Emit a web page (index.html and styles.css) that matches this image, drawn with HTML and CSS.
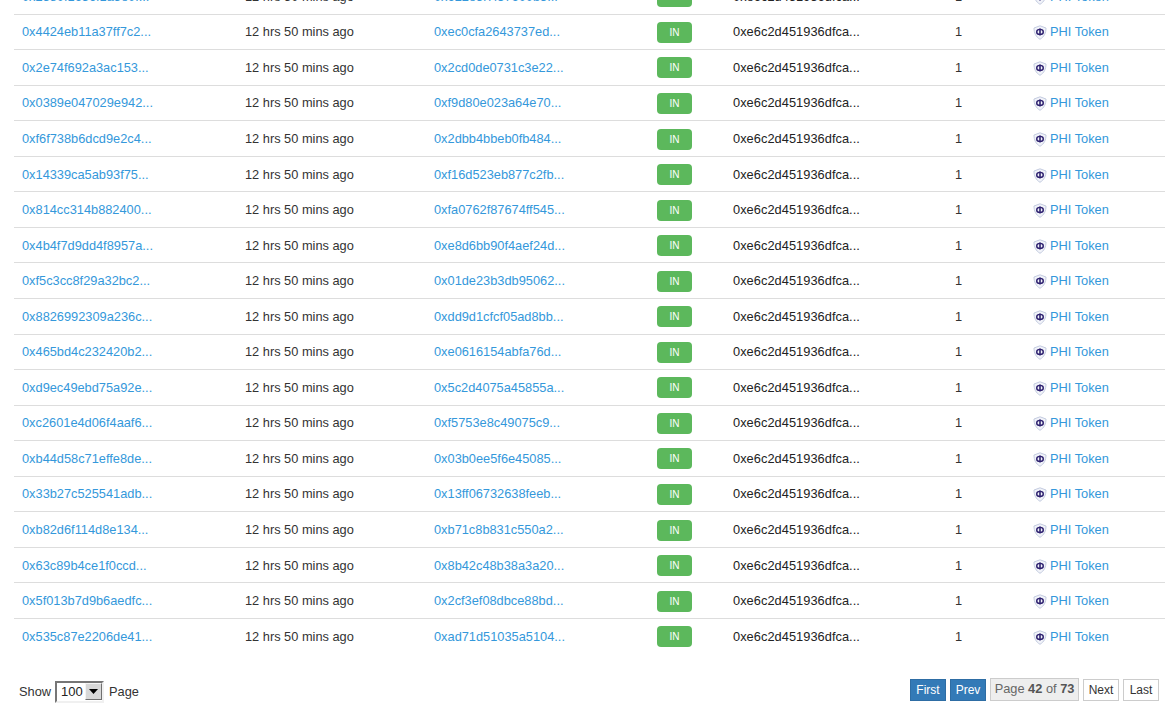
FILE: index.html
```html
<!DOCTYPE html>
<html lang="en">
<head>
<meta charset="utf-8">
<title>PHI Token transfers</title>
<link rel="stylesheet" href="styles.css">
</head>
<body>
<svg class="defs" width="0" height="0"><symbol id="phi" viewBox="0 0 14 15"><path d="M7 .8 13 3C13 8 11.2 11.8 7 14.3 2.8 11.8 1 8 1 3z" fill="#f1f3f9" stroke="#c3cbdf"/><path d="M3.7 6.9c0-1.6 1.4-2.5 3.3-2.5s3.3.9 3.3 2.5-1.4 2.5-3.3 2.5-3.3-.9-3.3-2.5z" fill="none" stroke="#2f2270" stroke-width="1.4"/><path d="M7 3.4v7.2" stroke="#2f2270" stroke-width="1.6"/></symbol></svg>
<main class="page">
<table class="txs">
<colgroup><col class="c1"><col class="c2"><col class="c3"><col class="c4"><col class="c5"><col class="c6"><col class="c7"></colgroup>
<tbody>
<tr><td><a>0x2380f1636f1a5e0f...</a></td><td>12 hrs 50 mins ago</td><td><a>0x622e5f7f37600b3...</a></td><td><span class="badge">IN</span></td><td><span class="hash">0xe6c2d451936dfca...</span></td><td>1</td><td><a class="token"><svg class="ico"><use href="#phi"/></svg><span>PHI Token</span></a></td></tr>
<tr><td><a>0x4424eb11a37ff7c2...</a></td><td>12 hrs 50 mins ago</td><td><a>0xec0cfa2643737ed...</a></td><td><span class="badge">IN</span></td><td><span class="hash">0xe6c2d451936dfca...</span></td><td>1</td><td><a class="token"><svg class="ico"><use href="#phi"/></svg><span>PHI Token</span></a></td></tr>
<tr><td><a>0x2e74f692a3ac153...</a></td><td>12 hrs 50 mins ago</td><td><a>0x2cd0de0731c3e22...</a></td><td><span class="badge">IN</span></td><td><span class="hash">0xe6c2d451936dfca...</span></td><td>1</td><td><a class="token"><svg class="ico"><use href="#phi"/></svg><span>PHI Token</span></a></td></tr>
<tr><td><a>0x0389e047029e942...</a></td><td>12 hrs 50 mins ago</td><td><a>0xf9d80e023a64e70...</a></td><td><span class="badge">IN</span></td><td><span class="hash">0xe6c2d451936dfca...</span></td><td>1</td><td><a class="token"><svg class="ico"><use href="#phi"/></svg><span>PHI Token</span></a></td></tr>
<tr><td><a>0xf6f738b6dcd9e2c4...</a></td><td>12 hrs 50 mins ago</td><td><a>0x2dbb4bbeb0fb484...</a></td><td><span class="badge">IN</span></td><td><span class="hash">0xe6c2d451936dfca...</span></td><td>1</td><td><a class="token"><svg class="ico"><use href="#phi"/></svg><span>PHI Token</span></a></td></tr>
<tr><td><a>0x14339ca5ab93f75...</a></td><td>12 hrs 50 mins ago</td><td><a>0xf16d523eb877c2fb...</a></td><td><span class="badge">IN</span></td><td><span class="hash">0xe6c2d451936dfca...</span></td><td>1</td><td><a class="token"><svg class="ico"><use href="#phi"/></svg><span>PHI Token</span></a></td></tr>
<tr><td><a>0x814cc314b882400...</a></td><td>12 hrs 50 mins ago</td><td><a>0xfa0762f87674ff545...</a></td><td><span class="badge">IN</span></td><td><span class="hash">0xe6c2d451936dfca...</span></td><td>1</td><td><a class="token"><svg class="ico"><use href="#phi"/></svg><span>PHI Token</span></a></td></tr>
<tr><td><a>0x4b4f7d9dd4f8957a...</a></td><td>12 hrs 50 mins ago</td><td><a>0xe8d6bb90f4aef24d...</a></td><td><span class="badge">IN</span></td><td><span class="hash">0xe6c2d451936dfca...</span></td><td>1</td><td><a class="token"><svg class="ico"><use href="#phi"/></svg><span>PHI Token</span></a></td></tr>
<tr><td><a>0xf5c3cc8f29a32bc2...</a></td><td>12 hrs 50 mins ago</td><td><a>0x01de23b3db95062...</a></td><td><span class="badge">IN</span></td><td><span class="hash">0xe6c2d451936dfca...</span></td><td>1</td><td><a class="token"><svg class="ico"><use href="#phi"/></svg><span>PHI Token</span></a></td></tr>
<tr><td><a>0x8826992309a236c...</a></td><td>12 hrs 50 mins ago</td><td><a>0xdd9d1cfcf05ad8bb...</a></td><td><span class="badge">IN</span></td><td><span class="hash">0xe6c2d451936dfca...</span></td><td>1</td><td><a class="token"><svg class="ico"><use href="#phi"/></svg><span>PHI Token</span></a></td></tr>
<tr><td><a>0x465bd4c232420b2...</a></td><td>12 hrs 50 mins ago</td><td><a>0xe0616154abfa76d...</a></td><td><span class="badge">IN</span></td><td><span class="hash">0xe6c2d451936dfca...</span></td><td>1</td><td><a class="token"><svg class="ico"><use href="#phi"/></svg><span>PHI Token</span></a></td></tr>
<tr><td><a>0xd9ec49ebd75a92e...</a></td><td>12 hrs 50 mins ago</td><td><a>0x5c2d4075a45855a...</a></td><td><span class="badge">IN</span></td><td><span class="hash">0xe6c2d451936dfca...</span></td><td>1</td><td><a class="token"><svg class="ico"><use href="#phi"/></svg><span>PHI Token</span></a></td></tr>
<tr><td><a>0xc2601e4d06f4aaf6...</a></td><td>12 hrs 50 mins ago</td><td><a>0xf5753e8c49075c9...</a></td><td><span class="badge">IN</span></td><td><span class="hash">0xe6c2d451936dfca...</span></td><td>1</td><td><a class="token"><svg class="ico"><use href="#phi"/></svg><span>PHI Token</span></a></td></tr>
<tr><td><a>0xb44d58c71effe8de...</a></td><td>12 hrs 50 mins ago</td><td><a>0x03b0ee5f6e45085...</a></td><td><span class="badge">IN</span></td><td><span class="hash">0xe6c2d451936dfca...</span></td><td>1</td><td><a class="token"><svg class="ico"><use href="#phi"/></svg><span>PHI Token</span></a></td></tr>
<tr><td><a>0x33b27c525541adb...</a></td><td>12 hrs 50 mins ago</td><td><a>0x13ff06732638feeb...</a></td><td><span class="badge">IN</span></td><td><span class="hash">0xe6c2d451936dfca...</span></td><td>1</td><td><a class="token"><svg class="ico"><use href="#phi"/></svg><span>PHI Token</span></a></td></tr>
<tr><td><a>0xb82d6f114d8e134...</a></td><td>12 hrs 50 mins ago</td><td><a>0xb71c8b831c550a2...</a></td><td><span class="badge">IN</span></td><td><span class="hash">0xe6c2d451936dfca...</span></td><td>1</td><td><a class="token"><svg class="ico"><use href="#phi"/></svg><span>PHI Token</span></a></td></tr>
<tr><td><a>0x63c89b4ce1f0ccd...</a></td><td>12 hrs 50 mins ago</td><td><a>0x8b42c48b38a3a20...</a></td><td><span class="badge">IN</span></td><td><span class="hash">0xe6c2d451936dfca...</span></td><td>1</td><td><a class="token"><svg class="ico"><use href="#phi"/></svg><span>PHI Token</span></a></td></tr>
<tr><td><a>0x5f013b7d9b6aedfc...</a></td><td>12 hrs 50 mins ago</td><td><a>0x2cf3ef08dbce88bd...</a></td><td><span class="badge">IN</span></td><td><span class="hash">0xe6c2d451936dfca...</span></td><td>1</td><td><a class="token"><svg class="ico"><use href="#phi"/></svg><span>PHI Token</span></a></td></tr>
<tr><td><a>0x535c87e2206de41...</a></td><td>12 hrs 50 mins ago</td><td><a>0xad71d51035a5104...</a></td><td><span class="badge">IN</span></td><td><span class="hash">0xe6c2d451936dfca...</span></td><td>1</td><td><a class="token"><svg class="ico"><use href="#phi"/></svg><span>PHI Token</span></a></td></tr>
</tbody>
</table>
<footer class="foot">
<div class="show">
<span>Show</span>
<span class="selectbox"><select class="sel"><option>100</option></select><span class="arrow"><svg width="9" height="5" viewBox="0 0 9 5"><path d="M0 0h9L4.5 5z" fill="#000"/></svg></span></span>
<span>Page</span>
</div>
<nav class="pager">
<a class="btn primary">First</a>
<a class="btn primary">Prev</a>
<span class="current">Page <b>42</b> of <b>73</b></span>
<a class="btn plain">Next</a>
<a class="btn plain">Last</a>
</nav>
</footer>
</main>
</body>
</html>
```
FILE: styles.css
```css
* { box-sizing: border-box; }
html, body { margin: 0; height: 705px; overflow: hidden; background: #fff; }
body { font-family: "Liberation Sans", Arial, sans-serif; font-size: 12.8px; color: #333; }
.defs { display: block; height: 0; }
.page { margin-top: -21.45px; padding-left: 14px; padding-right: 2px; }
.txs { width: 100%; border-collapse: collapse; table-layout: fixed; }
.c1 { width: 223px; } .c2 { width: 190px; } .c3 { width: 222px; } .c4 { width: 76px; }
.c5 { width: 222px; } .c6 { width: 78px; } .c7 { width: auto; }
.txs tr { height: 35.56px; }
.txs td { padding: 0 8px; border-bottom: 1px solid #ddd; vertical-align: middle; white-space: nowrap; }
.txs td:nth-child(3) { padding-left: 7px; }
.txs tr:last-child td { border-bottom: 0; }
.hash { color: #222; letter-spacing: 0.05px; }
a { color: #3498db; text-decoration: none; }
.badge { display: block; width: 35px; height: 21px; margin-top: 1px; border-radius: 4px; background: #5cb85c; color: #fff; font-size: 10px; line-height: 21px; text-align: center; }
.token { display: flex; align-items: center; gap: 3px; }
.ico { flex: none; width: 14px; height: 15px; margin-top: 2px; }
.foot { display: flex; justify-content: space-between; align-items: flex-start; margin-top: 24.8px; }
.show { display: flex; align-items: center; gap: 4px; padding-left: 5px; margin-top: 2px; height: 22px; }
.selectbox { display: flex; width: 49px; height: 22px; margin-right: 1px; background: #fff; border: 2px solid; border-color: #767676 #f0f0f0 #f0f0f0 #767676; }
.sel { appearance: none; -webkit-appearance: none; flex: 1; min-width: 0; border: 0; padding: 0 0 0 4px; margin: 0; background: #fff; font: 13px "Liberation Sans", Arial, sans-serif; color: #222; outline: none; }
.arrow { display: flex; align-items: center; justify-content: center; width: 17px; height: 17px; background: #d8d8d8; border: 1px solid; border-color: #f4f4f4 #707070 #707070 #f4f4f4; flex: none; }
.pager { display: flex; align-items: flex-start; gap: 4px; padding-right: 6px; }
.btn { display: block; height: 22px; width: 36px; line-height: 20px; text-align: center; border: 1px solid; font-size: 12px; }
.primary { background: #337ab7; border-color: #2e6da4; color: #fff; }
.plain { background: #fff; border-color: #ccc; color: #333; }
.current { display: block; height: 23px; margin-top: -1px; width: 89px; line-height: 19px; text-align: center; background: #eee; border: 1px solid #ccc; color: #666; white-space: nowrap; }
.current b { color: #555; }
```
